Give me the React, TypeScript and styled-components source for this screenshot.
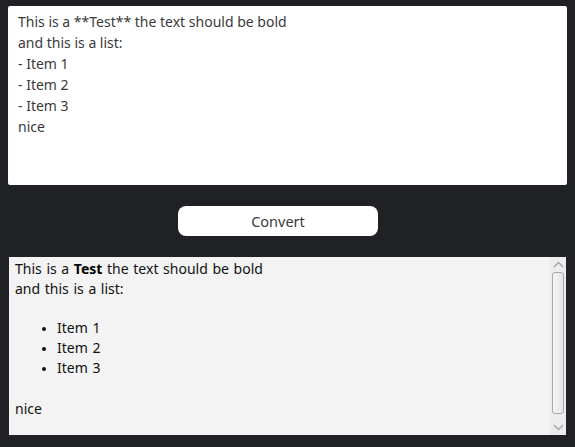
import styled, { createGlobalStyle } from "styled-components";

const GlobalStyle = createGlobalStyle`
  html, body {
    margin: 0;
    padding: 0;
    background: #202124;
  }
  body {
    font-family: "Noto Sans", "Open Sans", sans-serif;
  }
`;

const source = `This is a **Test** the text should be bold
and this is a list:
- Item 1
- Item 2
- Item 3
nice`;

const items = ["Item 1", "Item 2", "Item 3"];

export default function App() {
  return (
    <>
      <GlobalStyle />
      <Page>
        <Editor defaultValue={source} spellCheck={false} />
        <ButtonRow>
          <ConvertButton>Convert</ConvertButton>
        </ButtonRow>
        <Preview>
          <PreviewBody>
            <Line>
              This is a <b>Test</b> the text should be bold
            </Line>
            <Line>and this is a list:</Line>
            <List>
              {items.map((item) => (
                <li key={item}>{item}</li>
              ))}
            </List>
            <Line>nice</Line>
          </PreviewBody>
          <ScrollBar>
            <ArrowBox>
              <svg width="11" height="7" viewBox="0 0 11 7">
                <path d="M1 6 L5.5 1.5 L10 6" fill="none" stroke="#a6a6a6" strokeWidth="1.4" />
              </svg>
            </ArrowBox>
            <Thumb />
            <ArrowBox>
              <svg width="11" height="7" viewBox="0 0 11 7">
                <path d="M1 1 L5.5 5.5 L10 1" fill="none" stroke="#a6a6a6" strokeWidth="1.4" />
              </svg>
            </ArrowBox>
          </ScrollBar>
        </Preview>
      </Page>
    </>
  );
}

const Page = styled.div`
  display: flex;
  flex-direction: column;
  padding: 6px 8px 12px 8px;
`;

const Editor = styled.textarea`
  box-sizing: border-box;
  width: 559px;
  height: 179px;
  margin: 0;
  padding: 5px 10px;
  border: none;
  border-radius: 2px;
  background: #ffffff;
  color: #3a3a3a;
  font-family: "Noto Sans", "Open Sans", sans-serif;
  font-size: 14px;
  line-height: 21px;
  resize: none;
  outline: none;
  overflow: hidden;
`;

const ButtonRow = styled.div`
  display: flex;
  padding: 21px 0 21px 170px;
`;

const ConvertButton = styled.button`
  width: 200px;
  height: 30px;
  border: none;
  border-radius: 8px;
  background: #ffffff;
  color: #3a3a3a;
  font-family: "Noto Sans", "Open Sans", sans-serif;
  font-size: 14.5px;
  padding: 0;
  cursor: pointer;
`;

const Preview = styled.div`
  display: flex;
  width: 557px;
  height: 178px;
  margin-left: 1px;
  background: #f3f3f3;
`;

const PreviewBody = styled.div`
  flex: 1;
  padding: 2px 6px;
  color: #111111;
  font-size: 14px;
  line-height: 20px;
  word-spacing: 1px;
  overflow: hidden;
`;

const Line = styled.div`
  white-space: nowrap;
  b {
    font-weight: 700;
    color: #000;
  }
`;

const List = styled.ul`
  margin: 19px 0 21px 0;
  padding-left: 42px;
  li {
    line-height: 20px;
  }
  li::marker {
    font-size: 11px;
  }
`;

const ScrollBar = styled.div`
  width: 16px;
  display: flex;
  flex-direction: column;
  align-items: center;
  background: #ececec;
`;

const ArrowBox = styled.div`
  height: 15px;
  display: flex;
  align-items: center;
  justify-content: center;
`;

const Thumb = styled.div`
  box-sizing: border-box;
  flex: 1;
  width: 12px;
  margin: 0 0 6px 0;
  border: 1px solid #a9a9a9;
  border-radius: 3px;
  background: linear-gradient(to right, #f7f7f7, #e4e4e4);
`;
